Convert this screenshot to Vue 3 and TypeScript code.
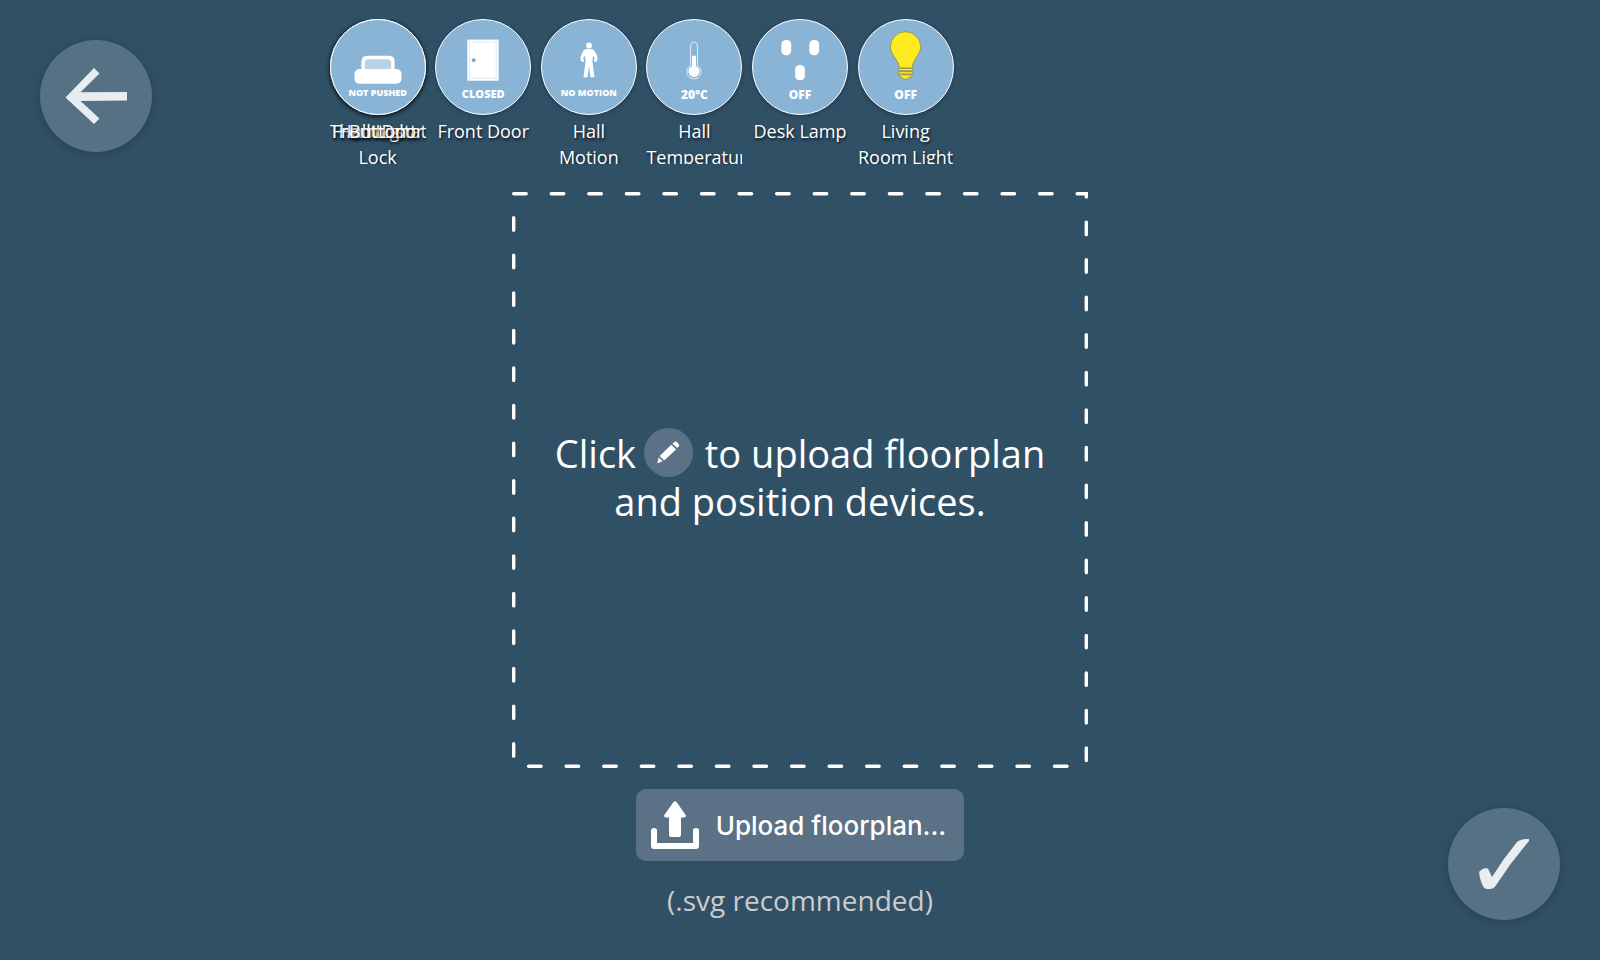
<script setup lang="ts">
type IconName = 'button' | 'door' | 'person' | 'thermometer' | 'socket' | 'bulb'

interface Device {
  name: string
  state: string
  icon: IconName
  slot: number
  size?: 'small' | 'medium'
}

const devices: Device[] = [
  { name: 'Thermostat', state: '', icon: 'button', slot: 1 },
  { name: 'Hall Light', state: '', icon: 'button', slot: 1 },
  { name: 'Front Door Lock', state: '', icon: 'button', slot: 1 },
  { name: 'Button', state: 'NOT PUSHED', icon: 'button', slot: 1, size: 'small' },
  { name: 'Front Door', state: 'CLOSED', icon: 'door', slot: 2, size: 'medium' },
  { name: 'Hall Motion', state: 'NO MOTION', icon: 'person', slot: 3, size: 'small' },
  { name: 'Hall Temperature', state: '20°C', icon: 'thermometer', slot: 4 },
  { name: 'Desk Lamp', state: 'OFF', icon: 'socket', slot: 5 },
  { name: 'Living Room Light', state: 'OFF', icon: 'bulb', slot: 6 },
]
</script>

<template>
  <main class="page">
    <button class="round back" type="button" aria-label="Back">
      <svg viewBox="0 0 112 112">
        <path d="M54 28 L59.500 33.500 L40.500 52.300 L87 52 V60.500 L40.500 61 L59.500 78.500 L54 84 L25.500 57.500 Z" />
      </svg>
    </button>

    <section class="devices" aria-label="Devices">
      <div v-for="d in devices" :key="d.name" class="device" :class="'slot-' + d.slot">
        <button class="disc" type="button" :aria-label="d.name">
          <svg viewBox="0 0 96 96">
            <g v-if="d.icon === 'button'">
              <path d="M31 53 V43 Q31 36.500 37 36.500 H60 Q65 36.500 65 43 V53 Z" fill="#fff" />
              <path d="M34.500 50 V44 Q34.500 40 39 40 H57 Q61.500 40 61.500 44 V50 Z" fill="#b8d2e6" />
              <rect x="24" y="50" width="48" height="15" rx="5" fill="#fff" />
            </g>
            <g v-else-if="d.icon === 'door'">
              <rect x="32" y="20" width="32" height="42" fill="#fff" />
              <rect x="34.500" y="22.500" width="27" height="37" fill="none" stroke="#dfeaf4" />
              <circle cx="38.500" cy="41" r="2" fill="#79a9d0" />
            </g>
            <g v-else-if="d.icon === 'person'" fill="#fff">
              <circle cx="48" cy="26" r="3" />
              <path d="M45 29.500 H51 Q53 30 54.500 33 L56.500 37 Q57 39.500 56 42 L53.500 43 L53 41.500 L54 39 L52 36.500 L51.500 43 L53.500 57 V58.500 H49.500 L48 47 L46.500 58.500 H42.500 V57 L44.500 43 L44 36.500 L42 39 L43 41.500 L42.500 43 L40 42 Q39 39.500 39.500 37 L42 32 Q43 30 45 29.500 Z" />
            </g>
            <g v-else-if="d.icon === 'thermometer'">
              <path d="M44.500 46.500 V26 A3.500 3.500 0 0 1 51.500 26 V46.500 A7.300 7.300 0 1 1 44.500 46.500 Z" fill="none" stroke="#e3edf5" />
              <path d="M46 47 V36.500 H50 V47 A5.800 5.800 0 1 1 46 47 Z" fill="#fff" />
            </g>
            <g v-else-if="d.icon === 'socket'" fill="#fff">
              <rect x="29" y="20.500" width="10" height="15.500" rx="4.500" />
              <rect x="57.500" y="20.500" width="10" height="15.500" rx="4.500" />
              <rect x="43" y="46" width="10" height="15.500" rx="4.500" />
            </g>
            <g v-else stroke="#77763f" stroke-width=".6" fill="#ffea21">
              <path d="M41.500 49 Q41 44 37 39 Q32 32 32 27.500 A15.500 15.500 0 0 1 63 27.500 Q63 32 58 39 Q54.500 44 54 49 Z" />
              <rect x="40" y="49.500" width="15" height="2.300" rx="1" />
              <rect x="40" y="52.800" width="15" height="2.300" rx="1" />
              <path d="M40.500 56 H54.500 Q54.500 58 51.500 58.500 Q50.500 60.500 47.500 60.500 Q44.500 60.500 43.500 58.500 Q40.500 58 40.500 56 Z" />
            </g>
          </svg>
          <span class="state" :class="d.size">{{ d.state }}</span>
        </button>
        <p class="name">{{ d.name }}</p>
      </div>
    </section>

    <section class="dropzone">
      <svg class="dashes" viewBox="0 0 460 460" aria-hidden="true">
        <rect x="1.350" y="1.350" width="457.300" height="457.300" fill="none" stroke="#fff" stroke-width="2.700" stroke-dasharray="10 20" stroke-linecap="round" />
      </svg>
      <p class="hint">
        Click
        <span class="pencil">
          <svg viewBox="0 0 50 50">
            <path d="M29 16 L31.500 14 Q32.500 13.300 33.500 14.200 L35.500 16.500 Q36.300 17.500 35.500 18.500 L34 20.500 Z M27.800 17.200 L32.800 22 L20.500 33.200 L16 28.500 Z M15 30 L19 34 L13.500 36 Z" />
          </svg>
        </span>
        to upload floorplan<br />and position devices.
      </p>
    </section>

    <button class="upload" type="button">
      <svg viewBox="0 0 48 48">
        <path d="M22.500 1 Q24 -.5 25.500 1 L35 14.500 Q35 16.500 33 16.500 H30 V34 Q30 36 28 36 H20 Q18 36 18 34 V16.500 H15 Q13 16.500 13 14.500 Z" />
        <path d="M0 29.500 Q0 27 3 27 Q6 27 6 29.500 V42 H42 V29.500 Q42 27 45 27 Q48 27 48 29.500 V45 Q48 48 45 48 H3 Q0 48 0 45 Z" />
      </svg>
      <span>Upload floorplan...</span>
    </button>
    <p class="note">(.svg recommended)</p>

    <button class="round done" type="button" aria-label="Done">
      <svg viewBox="0 0 112 112">
        <path d="M31 64 Q35 59 40 60.500 L44 69 Q55 51 69 34 Q73 30.500 81 31 V33 Q63 54 47.500 78 Q45.500 81 42 81 H39 Q36.500 81 35.500 79 Q32 73 31 64 Z" />
      </svg>
    </button>
  </main>
</template>

<style>
body {
  margin: 0;
  background: #305066;
}
</style>

<style scoped>
.page {
  position: relative;
  box-sizing: border-box;
  min-height: 100vh;
  padding-top: 2vh;
  display: flex;
  flex-direction: column;
  align-items: center;
  background: #305066;
  color: #fff;
  font-family: "Open Sans", sans-serif;
}
button {
  border: 0;
  padding: 0;
  margin: 0;
  color: inherit;
  font-family: inherit;
  cursor: pointer;
}
p { margin: 0; }
.round {
  position: absolute;
  width: 112px;
  height: 112px;
  border-radius: 50%;
  background: #567084;
  box-shadow: 0 2px 8px rgba(0, 0, 0, .2);
}
.round svg { display: block; fill: #e8edf1; }
.back { left: 40px; top: 40px; }
.done { right: 40px; bottom: 40px; }
.devices {
  display: grid;
  grid-template-columns: repeat(9, 10vh);
  column-gap: 1vh;
  height: 145px;
  overflow: hidden;
  padding: 0 8px;
}
.device { grid-row: 1; }
.slot-1 { grid-column: 1; }
.slot-2 { grid-column: 2; }
.slot-3 { grid-column: 3; }
.slot-4 { grid-column: 4; }
.slot-5 { grid-column: 5; }
.slot-6 { grid-column: 6; }
.disc {
  box-sizing: border-box;
  display: grid;
  width: 10vh;
  height: 10vh;
  border: 1px solid #fff;
  border-radius: 50%;
  background: #89b4d6;
  box-shadow: 0 1px 4px rgba(0, 0, 0, .3);
}
.disc svg, .state { grid-area: 1 / 1; }
.disc svg { width: 100%; display: block; }
.state {
  align-self: end;
  padding-bottom: 11px;
  font-size: 12px;
  line-height: 16px;
  font-weight: 800;
  text-align: center;
}
.state.medium {
  padding-bottom: 12px;
  font-size: 11px;
}
.state.small {
  padding-bottom: 13px;
  font-size: 9px;
}
.name {
  height: 48px;
  overflow: hidden;
  font-size: 18px;
  line-height: 26px;
  padding-top: 3px;
  text-align: center;
  text-shadow: 1px 2px 3px rgba(0, 0, 0, .7);
}
.dropzone {
  display: grid;
  place-items: center;
  width: 60vh;
  height: 60vh;
  margin-top: 28px;
}
.dashes, .hint { grid-area: 1 / 1; }
.dashes { width: 100%; }
.hint {
  padding-bottom: 6px;
  font-size: 38px;
  line-height: 48px;
  text-align: center;
}
.pencil {
  display: inline-block;
  width: 49px;
  height: 49px;
  margin: -4px 2px 0 -2px;
  border-radius: 50%;
  background: #5b7286;
  vertical-align: -9px;
}
.pencil svg { display: block; fill: #fff; }
.upload {
  display: flex;
  align-items: center;
  gap: 17px;
  height: 72px;
  margin-top: 21px;
  padding: 0 18px 0 15px;
  border-radius: 10px;
  background: #5b7286;
  font: 500 26px/32px Inter, sans-serif;
}
.upload svg { width: 48px; height: 48px; fill: #fff; }
.upload span { padding-top: 2px; }
.note {
  margin-top: 19px;
  color: #ccc;
  font-size: 28px;
  line-height: 40px;
}
</style>
